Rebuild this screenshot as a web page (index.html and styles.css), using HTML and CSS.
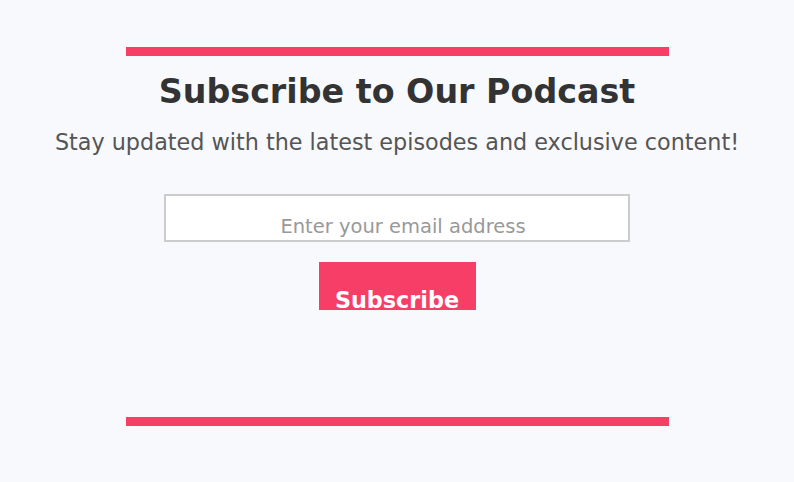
FILE: index.html
```html
<!DOCTYPE html>
<html>
<head>
<meta charset="utf-8">
<link rel="stylesheet" href="styles.css">
</head>
<body>
<main class="page">
  <div class="bar"></div>
  <h1 class="title">Subscribe to Our Podcast</h1>
  <p class="subtitle">Stay updated with the latest episodes and exclusive content!</p>
  <form class="form">
    <input class="email" type="email" placeholder="Enter your email address">
    <button class="btn" type="button">Subscribe</button>
  </form>
  <div class="bar bar-bottom"></div>
</main>
</body>
</html>
```
FILE: styles.css
```css
html, body {
  margin: 0;
  padding: 0;
  background: #f8f9fd;
}
body {
  font-family: "DejaVu Sans", sans-serif;
}
.page {
  width: 794px;
  height: 482px;
  display: flex;
  flex-direction: column;
  align-items: center;
  padding-top: 47px;
  box-sizing: border-box;
}
.bar {
  width: 543px;
  height: 9px;
  background: #f73e67;
  flex: none;
}
.title {
  margin: 17px 0 0;
  font-size: 33.3px;
  font-weight: bold;
  color: #333333;
  line-height: 38px;
}
.subtitle {
  margin: 18px 0 0;
  font-size: 22.3px;
  color: #555555;
  line-height: 26px;
  white-space: nowrap;
}
.form {
  margin-top: 39px;
  display: flex;
  flex-direction: column;
  align-items: center;
}
.email {
  width: 466px;
  height: 48px;
  box-sizing: border-box;
  border: 2px solid #cccccc;
  background: #ffffff;
  font-family: "DejaVu Sans", sans-serif;
  font-size: 19.5px;
  text-align: center;
  padding: 17px 4px 0 16px;
  outline: none;
}
.email::placeholder {
  color: #999999;
}
.btn {
  margin-top: 20px;
  width: 157px;
  height: 48px;
  border: none;
  background: #f73e67;
  color: #ffffff;
  font-family: "DejaVu Sans", sans-serif;
  font-size: 22.3px;
  font-weight: bold;
  padding: 26px 0 0;
  line-height: 24px;
}
.bar-bottom {
  margin-top: 107px;
}
```
